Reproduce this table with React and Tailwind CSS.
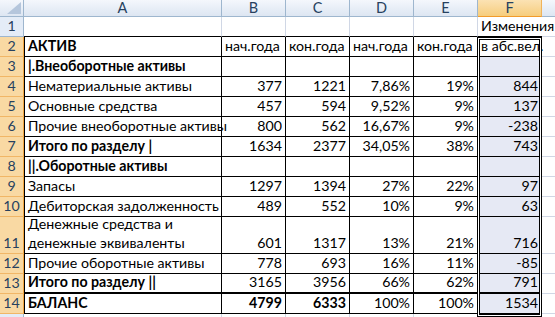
import React from "react";

const rows = [
  { n: 2, a: "АКТИВ", bold: true, text: true, vals: ["нач.года", "кон.года", "нач.года", "кон.года", "в абс.вел."] },
  { n: 3, a: "|.Внеоборотные активы", bold: true, vals: ["", "", "", "", ""] },
  { n: 4, a: "Нематериальные активы", vals: ["377", "1221", "7,86%", "19%", "844"] },
  { n: 5, a: "Основные средства", vals: ["457", "594", "9,52%", "9%", "137"] },
  { n: 6, a: "Прочие внеоборотные активы", vals: ["800", "562", "16,67%", "9%", "-238"] },
  { n: 7, a: "Итого по разделу |", bold: true, vals: ["1634", "2377", "34,05%", "38%", "743"] },
  { n: 8, a: "||.Оборотные активы", bold: true, vals: ["", "", "", "", ""] },
  { n: 9, a: "Запасы", vals: ["1297", "1394", "27%", "22%", "97"] },
  { n: 10, a: "Дебиторская задолженность", vals: ["489", "552", "10%", "9%", "63"] },
  { n: 11, a: ["Денежные средства и", "денежные эквиваленты"], tall: true, vals: ["601", "1317", "13%", "21%", "716"] },
  { n: 12, a: "Прочие оборотные активы", vals: ["778", "693", "16%", "11%", "-85"] },
  { n: 13, a: "Итого по разделу ||", bold: true, thick: true, vals: ["3165", "3956", "66%", "62%", "791"] },
  { n: 14, a: "БАЛАНС", bold: true, boldVals: [true, true], vals: ["4799", "6333", "100%", "100%", "1534"] },
];

const colHeads = ["B", "C", "D", "E"];

const App = () => {

  return (

    <div className="w-[555px] h-[317px] overflow-hidden bg-white relative font-['Lato','Liberation_Sans',sans-serif] text-[14.2px] text-black">

      {/* Column headers */}

      <div className="flex h-[17px] text-[#27415f] leading-[16px] text-[14.5px]">

        <div className="w-[24px] shrink-0 relative border-r border-b border-[#9eb6ce] bg-gradient-to-b from-[#f4f7fc] to-[#dde6f2]">
          <svg width="14" height="12" className="absolute right-[2px] bottom-[2px]">
            <polygon points="14,0 14,12 0,12" fill="#b5c6dc" />
          </svg>
        </div>

        <div className="w-[198px] shrink-0 text-center border-r border-b border-[#9eb6ce] bg-gradient-to-b from-[#f4f7fc] to-[#dde6f2]">
          A
        </div>

        {colHeads.map(c => (
          <div key={c} className="w-[64px] shrink-0 text-center border-r border-b border-[#9eb6ce] bg-gradient-to-b from-[#f4f7fc] to-[#dde6f2]">
            {c}
          </div>
        ))}

        <div className="w-[64px] shrink-0 text-center border-r border-b border-r-[#f0b35a] border-b-[#f29b2a] bg-gradient-to-b from-[#fbe2b3] to-[#f6cd7c]">
          F
        </div>

        <div className="w-[64px] shrink-0 border-r border-b border-[#9eb6ce] bg-gradient-to-b from-[#f4f7fc] to-[#dde6f2]" />

      </div>

      {/* Row 1 */}

      <div className="flex h-[20px]">

        <div className="w-[24px] shrink-0 flex items-end justify-center pb-[1px] leading-[18px] text-[#27415f] bg-[#e4ecf7] border-r border-b border-[#9eb6ce]">
          1
        </div>

        <div className="w-[198px] shrink-0 border-r border-[#d0d7e5] border-b border-b-black" />

        {colHeads.map(c => (
          <div key={c} className="w-[64px] shrink-0 border-r border-[#d0d7e5] border-b border-b-black" />
        ))}

        <div className="w-[64px] shrink-0 border-b border-b-black flex items-end pl-[3px] pb-[1px] leading-[18px] whitespace-nowrap overflow-visible">
          Изменения
        </div>

        <div className="w-[64px] shrink-0 border-r border-b border-[#d0d7e5]" />

      </div>

      {/* Table rows */}

      {rows.map(r => (

        <div key={r.n} className={`flex ${r.tall ? "h-[37px]" : "h-[20px]"}`}>

          <div className="w-[24px] shrink-0 flex items-end justify-center pb-[1px] leading-[18px] text-[#27415f] bg-[#f9d9a3] border-r border-b border-r-[#f2a642] border-b-[#f1b666]">
            {r.n}
          </div>

          <div className={`w-[198px] shrink-0 flex flex-col justify-end pl-[3px] pb-[1px] leading-[18px] whitespace-nowrap border-l border-r border-black ${r.thick ? "border-b-2" : "border-b"} ${r.bold ? "font-bold" : ""}`}>
            {Array.isArray(r.a)
              ? r.a.map(t => <span key={t} className="leading-[19px]">{t}</span>)
              : r.a}
          </div>

          {r.vals.map((v, i) => (
            <div
              key={i}
              className={`w-[64px] shrink-0 flex items-end pb-[1px] leading-[18px] whitespace-nowrap border-r border-black ${r.thick ? "border-b-2" : "border-b"} ${r.text ? "justify-start pl-[3px]" : "justify-end pr-[3px]"} ${r.boldVals && r.boldVals[i] ? "font-bold" : ""} ${i === 4 && r.n !== 2 ? "bg-[#e6e9f4]" : ""}`}
            >
              {v}
            </div>
          ))}

          <div className="w-[64px] shrink-0 border-r border-b border-[#d0d7e5]" />

        </div>

      ))}

      {/* Row 15 (cut off) */}

      <div className="flex h-[20px]">
        <div className="w-[24px] shrink-0 bg-[#e4ecf7] border-r border-[#9eb6ce]" />
        <div className="w-[198px] shrink-0 border-r border-[#d0d7e5]" />
        {colHeads.map(c => (
          <div key={c} className="w-[64px] shrink-0 border-r border-[#d0d7e5]" />
        ))}
        <div className="w-[64px] shrink-0 border-r border-[#d0d7e5]" />
      </div>

      {/* Selection outline F2:F14 */}

      <div className="absolute left-[477px] top-[37px] w-[65px] h-[280px] border border-black shadow-[inset_0_0_0_1px_white,inset_0_0_0_2px_black] pointer-events-none" />

    </div>

  );

};

export default App;
